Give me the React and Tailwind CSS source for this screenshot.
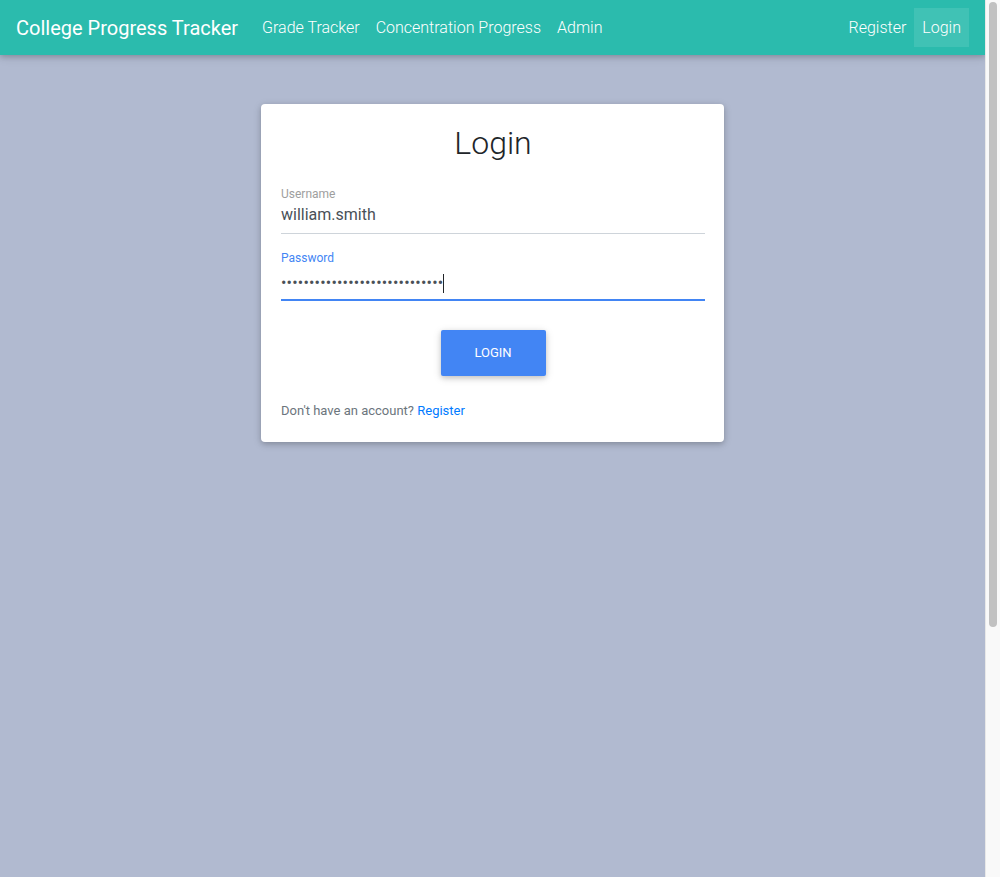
import React from "react";

export default function App() {
  return (
    <div
      className="h-[877px] flex overflow-hidden bg-[#b1bad0] text-[#212529]"
      style={{ fontFamily: "Roboto, 'Liberation Sans', sans-serif" }}
    >
      <div className="flex-1 min-w-0">
        {/* NAVBAR */}
        <nav className="h-[55px] bg-[#2bbbad] flex items-center px-4 shadow-[0_2px_5px_0_rgba(0,0,0,0.16),0_2px_10px_0_rgba(0,0,0,0.12)]">
          <span className="text-white text-[20px] mr-4">College Progress Tracker</span>
          <div className="flex items-center font-light text-[16px] text-white">
            <a className="px-2 py-2">Grade Tracker</a>
            <a className="px-2 py-2">Concentration Progress</a>
            <a className="px-2 py-2">Admin</a>
          </div>
          <div className="ml-auto flex items-center font-light text-[16px] text-white">
            <a className="px-2 h-[39px] flex items-center">Register</a>
            <a className="px-2 h-[39px] flex items-center bg-white/10">Login</a>
          </div>
        </nav>

        {/* CARD */}
        <div className="flex justify-center pt-[49px]">
          <div className="w-[463px] bg-white rounded-[4px] shadow-[0_2px_5px_0_rgba(0,0,0,0.16),0_2px_10px_0_rgba(0,0,0,0.12)] pl-5 pr-[19px] pt-[19px] pb-[21px]">
            <h1 className="text-center text-[32px] font-light leading-[40px] text-[#212529]">Login</h1>

            <div className="mt-[24px]">
              <label className="block text-[12px] leading-[14px] text-[#9e9e9e]">Username</label>
              <div className="text-[16px] leading-[20px] text-[#495057] mt-[4px] pb-[8px] border-b border-[#ced4da]">
                william.smith
              </div>
            </div>

            <div className="mt-[17px]">
              <label className="block text-[12px] leading-[14px] text-[#4285f4]">Password</label>
              <div className="flex items-center mt-[4px] h-[32px] pb-[2px] border-b-2 border-[#4285f4]">
                <span className="text-[16px] leading-[20px] text-[#495057] tracking-[0.2px]">
                  {"•".repeat(29)}
                </span>
                <span className="w-px h-[19px] bg-[#212529]" />
              </div>
            </div>

            <div className="flex justify-center mt-[29px]">
              <button className="w-[105px] h-[46px] bg-[#4285f4] text-white text-[13px] rounded-[2px] uppercase shadow-[0_2px_5px_0_rgba(0,0,0,0.16),0_2px_10px_0_rgba(0,0,0,0.12)]">
                Login
              </button>
            </div>

            <p className="mt-[25px] text-[13px] text-[#6c757d]">
              Don't have an account? <a className="text-[#007bff]">Register</a>
            </p>
          </div>
        </div>
      </div>

      {/* SCROLLBAR */}
      <div className="w-[15px] bg-[#f9f9f9] border-l border-[#e8e8e8] pt-[2px] flex justify-center">
        <div className="w-[8px] h-[625px] rounded-full bg-[#c1c1c1]" />
      </div>
    </div>
  );
}
